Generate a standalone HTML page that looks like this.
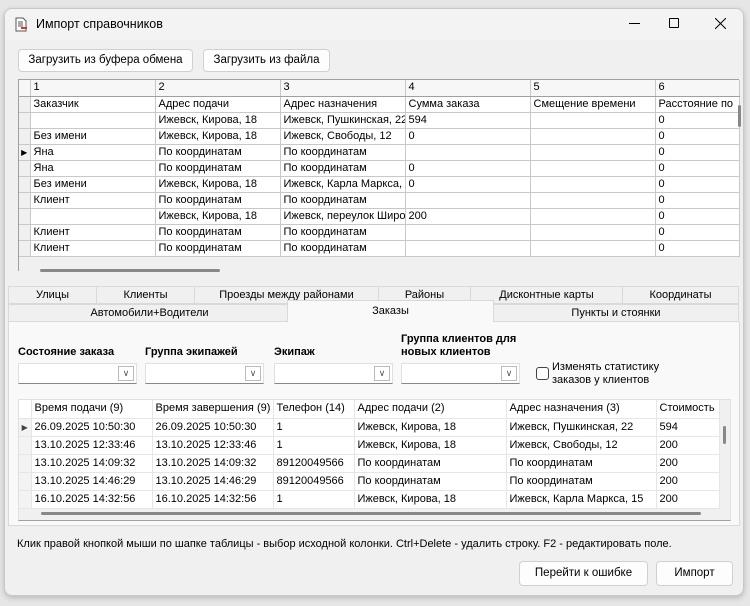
<!DOCTYPE html>
<html><head><meta charset="utf-8"><style>
*{box-sizing:border-box;margin:0;padding:0}
body{width:750px;height:606px;background:#e6e6e6;font-family:"Liberation Sans",sans-serif;font-size:11px;color:#000;position:relative;overflow:hidden}
.win{position:absolute;left:4px;top:8px;width:740px;height:588px;background:#f0f0f0;border:1px solid #c8c8c8;border-radius:8px;overflow:hidden;box-shadow:0 2px 6px rgba(0,0,0,.2)}
.title{position:absolute;left:0;top:0;width:100%;height:31px;background:#f3f3f3}
.a{position:absolute}
.btn{position:absolute;background:#fdfdfd;border:1px solid #d0d0d0;border-radius:4px;text-align:center;font-size:11.5px}
table{border-collapse:collapse;table-layout:fixed}
td{border-right:1px solid #c8c8c8;border-bottom:1px solid #c8c8c8;white-space:nowrap;overflow:hidden;padding-left:3px;font-size:11px}
.g1 td{height:16px;line-height:15px}
.g1 tr:first-child td{background:#f7f7f7;border-bottom:1px solid #a0a0a0}
.g1 td:first-child{background:#f0f0f0;padding:0}
.g2 td{height:18px;line-height:17px;border-color:#e6e6e6;padding-left:3px}
.g2 tr:first-child td{background:#fff}
.g2 td:first-child{background:#f3f3f3;padding:0;border-color:#e6e6e6}
.tab{position:absolute;background:#f0f0f0;border:1px solid #d9d9d9;text-align:center;font-size:11px;line-height:16px}
.lbl{position:absolute;font-weight:bold;font-size:11px}
.cb{position:absolute;height:21px;background:#fff;border:1px solid #e0e0e0;border-bottom:1px solid #888}
.cb i{position:absolute;right:2px;top:2px;width:16px;height:15px;border:1px solid #bbb;background:#fff;font-style:normal;font-size:9px;text-align:center;line-height:13px;color:#555}
</style></head><body>
<div class="win">
<div class="title">
<svg class="a" style="left:9px;top:8px" width="14" height="15"><path d="M2 1h7l3 3v10H2z" fill="#fff" stroke="#555"/><path d="M4 5h5M4 7h5M4 9h5" stroke="#555"/><path d="M7 11h6" stroke="#d33" stroke-width="2"/></svg>
<div class="a" style="left:31px;top:8px;font-size:12.5px">Импорт справочников</div>
<div class="a" style="left:624px;top:14px;width:11px;border-top:1px solid #000"></div>
<div class="a" style="left:664px;top:9px;width:10px;height:10px;border:1px solid #000;border-radius:1px"></div>
<svg class="a" style="left:710px;top:9px" width="11" height="11"><path d="M0 0L11 11M11 0L0 11" stroke="#000"/></svg>
</div>
<div class="btn" style="left:13px;top:40px;width:175px;height:23px;line-height:21px">Загрузить из буфера обмена</div>
<div class="btn" style="left:198px;top:40px;width:127px;height:23px;line-height:21px">Загрузить из файла</div>

<div class="a" style="left:13px;top:70px;width:721px;height:192px;background:#f0f0f0;border-left:1px solid #a0a0a0;border-top:1px solid #a0a0a0">
<table class="g1" style="width:710px;background:#fff">
<colgroup><col style="width:11px"><col style="width:125px"><col style="width:125px"><col style="width:125px"><col style="width:125px"><col style="width:125px"><col style="width:84px"></colgroup>
<tr><td></td><td>1</td><td>2</td><td>3</td><td>4</td><td>5</td><td>6</td></tr>
<tr><td></td><td>Заказчик</td><td>Адрес подачи</td><td>Адрес назначения</td><td>Сумма заказа</td><td>Смещение времени</td><td>Расстояние по</td></tr>
<tr><td></td><td></td><td>Ижевск, Кирова, 18</td><td>Ижевск, Пушкинская, 22</td><td>594</td><td></td><td>0</td></tr>
<tr><td></td><td>Без имени</td><td>Ижевск, Кирова, 18</td><td>Ижевск, Свободы, 12</td><td>0</td><td></td><td>0</td></tr>
<tr><td style="font-size:8px;text-align:center">&#9654;</td><td>Яна</td><td>По координатам</td><td>По координатам</td><td></td><td></td><td>0</td></tr>
<tr><td></td><td>Яна</td><td>По координатам</td><td>По координатам</td><td>0</td><td></td><td>0</td></tr>
<tr><td></td><td>Без имени</td><td>Ижевск, Кирова, 18</td><td>Ижевск, Карла Маркса, 15</td><td>0</td><td></td><td>0</td></tr>
<tr><td></td><td>Клиент</td><td>По координатам</td><td>По координатам</td><td></td><td></td><td>0</td></tr>
<tr><td></td><td></td><td>Ижевск, Кирова, 18</td><td>Ижевск, переулок Широкий</td><td>200</td><td></td><td>0</td></tr>
<tr><td></td><td>Клиент</td><td>По координатам</td><td>По координатам</td><td></td><td></td><td>0</td></tr>
<tr><td></td><td>Клиент</td><td>По координатам</td><td>По координатам</td><td></td><td></td><td>0</td></tr>
</table>
<div class="a" style="left:21px;top:189px;width:180px;height:3px;background:#888;border-radius:2px"></div>
<div class="a" style="left:719px;top:25px;width:3px;height:22px;background:#888;border-radius:2px"></div>
</div>

<div class="tab" style="left:3px;top:277px;width:89px">Улицы</div>
<div class="tab" style="left:91px;top:277px;width:99px">Клиенты</div>
<div class="tab" style="left:189px;top:277px;width:185px">Проезды между районами</div>
<div class="tab" style="left:373px;top:277px;width:93px">Районы</div>
<div class="tab" style="left:465px;top:277px;width:153px">Дисконтные карты</div>
<div class="tab" style="left:617px;top:277px;width:117px">Координаты</div>
<div class="tab" style="left:3px;top:295px;width:283px">Автомобили+Водители</div>
<div class="tab" style="left:488px;top:295px;width:246px">Пункты и стоянки</div>
<div class="a" style="left:282px;top:291px;width:207px;height:24px;background:#f9f9f9;border:1px solid #d9d9d9;border-bottom:none;text-align:center;line-height:20px">Заказы</div>
<div class="a" style="left:3px;top:313px;width:732px;height:204px;background:#f9f9f9;border:1px solid #d9d9d9;border-top:none"></div>

<div class="lbl" style="left:13px;top:337px">Состояние заказа</div>
<div class="lbl" style="left:140px;top:337px">Группа экипажей</div>
<div class="lbl" style="left:269px;top:337px">Экипаж</div>
<div class="lbl" style="left:396px;top:324px;line-height:13px">Группа клиентов для<br>новых клиентов</div>
<div class="cb" style="left:13px;top:354px;width:119px"><i>&#8744;</i></div>
<div class="cb" style="left:140px;top:354px;width:119px"><i>&#8744;</i></div>
<div class="cb" style="left:269px;top:354px;width:119px"><i>&#8744;</i></div>
<div class="cb" style="left:396px;top:354px;width:119px"><i>&#8744;</i></div>
<div class="a" style="left:531px;top:358px;width:13px;height:13px;border:1px solid #444;border-radius:3px;background:#fff"></div>
<div class="a" style="left:547px;top:352px;line-height:13px">Изменять статистику<br>заказов у клиентов</div>

<div class="a" style="left:13px;top:390px;width:713px;height:122px;background:#f0f0f0;border:1px solid #e0e0e0;border-bottom:1px solid #a0a0a0">
<table class="g2" style="width:700px;background:#fff">
<colgroup><col style="width:12px"><col style="width:121px"><col style="width:121px"><col style="width:81px"><col style="width:152px"><col style="width:150px"><col style="width:63px"></colgroup>
<tr><td></td><td>Время подачи (9)</td><td>Время завершения (9)</td><td>Телефон (14)</td><td>Адрес подачи (2)</td><td>Адрес назначения (3)</td><td>Стоимость</td></tr>
<tr><td style="font-size:8px;text-align:center;color:#444">&#9654;</td><td>26.09.2025 10:50:30</td><td>26.09.2025 10:50:30</td><td>1</td><td>Ижевск, Кирова, 18</td><td>Ижевск, Пушкинская, 22</td><td>594</td></tr>
<tr><td></td><td>13.10.2025 12:33:46</td><td>13.10.2025 12:33:46</td><td>1</td><td>Ижевск, Кирова, 18</td><td>Ижевск, Свободы, 12</td><td>200</td></tr>
<tr><td></td><td>13.10.2025 14:09:32</td><td>13.10.2025 14:09:32</td><td>89120049566</td><td>По координатам</td><td>По координатам</td><td>200</td></tr>
<tr><td></td><td>13.10.2025 14:46:29</td><td>13.10.2025 14:46:29</td><td>89120049566</td><td>По координатам</td><td>По координатам</td><td>200</td></tr>
<tr><td></td><td>16.10.2025 14:32:56</td><td>16.10.2025 14:32:56</td><td>1</td><td>Ижевск, Кирова, 18</td><td>Ижевск, Карла Маркса, 15</td><td>200</td></tr>
</table>
<div class="a" style="left:22px;top:112px;width:660px;height:3px;background:#888;border-radius:2px"></div>
<div class="a" style="left:704px;top:26px;width:3px;height:18px;background:#888;border-radius:2px"></div>
</div>

<div class="a" style="left:12px;top:529px;font-size:11px">Клик правой кнопкой мыши по шапке таблицы - выбор исходной колонки. Ctrl+Delete - удалить строку. F2 - редактировать поле.</div>
<div class="btn" style="left:514px;top:552px;width:129px;height:25px;line-height:23px">Перейти к ошибке</div>
<div class="btn" style="left:651px;top:552px;width:77px;height:25px;line-height:23px">Импорт</div>
</div>
</body></html>
